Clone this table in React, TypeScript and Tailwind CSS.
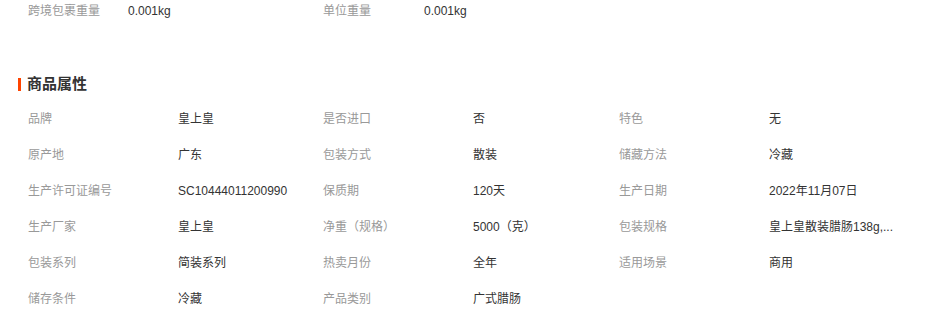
const attrs: [string, string][] = [
  ['品牌', '皇上皇'],
  ['是否进口', '否'],
  ['特色', '无'],
  ['原产地', '广东'],
  ['包装方式', '散装'],
  ['储藏方法', '冷藏'],
  ['生产许可证编号', 'SC10444011200990'],
  ['保质期', '120天'],
  ['生产日期', '2022年11月07日'],
  ['生产厂家', '皇上皇'],
  ['净重（规格）', '5000（克）'],
  ['包装规格', '皇上皇散装腊肠138g,...'],
  ['包装系列', '简装系列'],
  ['热卖月份', '全年'],
  ['适用场景', '商用'],
  ['储存条件', '冷藏'],
  ['产品类别', '广式腊肠'],
];

export default function App() {
  return (
    <div
      className="w-[930px] h-[321px] bg-white text-[12px] overflow-hidden"
      style={{ fontFamily: '"Liberation Sans", "Noto Sans CJK SC", sans-serif' }}
    >
      {/* weights */}
      <div className="flex h-[22px] items-center pl-[28px]">
        <div className="flex w-[295px]">
          <span className="w-[100px] text-[#999]">跨境包裹重量</span>
          <span className="text-[#333]">0.001kg</span>
        </div>
        <div className="flex w-[295px]">
          <span className="w-[101px] text-[#999]">单位重量</span>
          <span className="text-[#333]">0.001kg</span>
        </div>
      </div>

      {/* section title */}
      <div className="mt-[50px] flex h-[24px] items-center pl-[18px]">
        <span className="mr-[6px] h-[13px] w-[3px] bg-[#ff4400]" />
        <h3 className="text-[15px] font-bold text-[#333]">商品属性</h3>
      </div>

      <div className="mt-[5px] grid grid-cols-[295px_296px_295px] pl-[28px]">
        {attrs.map(([label, value]) => (
          <div key={label} className="flex h-[36px] items-center">
            <span className="w-[150px] shrink-0 text-[#999]">{label}</span>
            <span className="whitespace-nowrap text-[#333]">{value}</span>
          </div>
        ))}
      </div>
    </div>
  );
}
